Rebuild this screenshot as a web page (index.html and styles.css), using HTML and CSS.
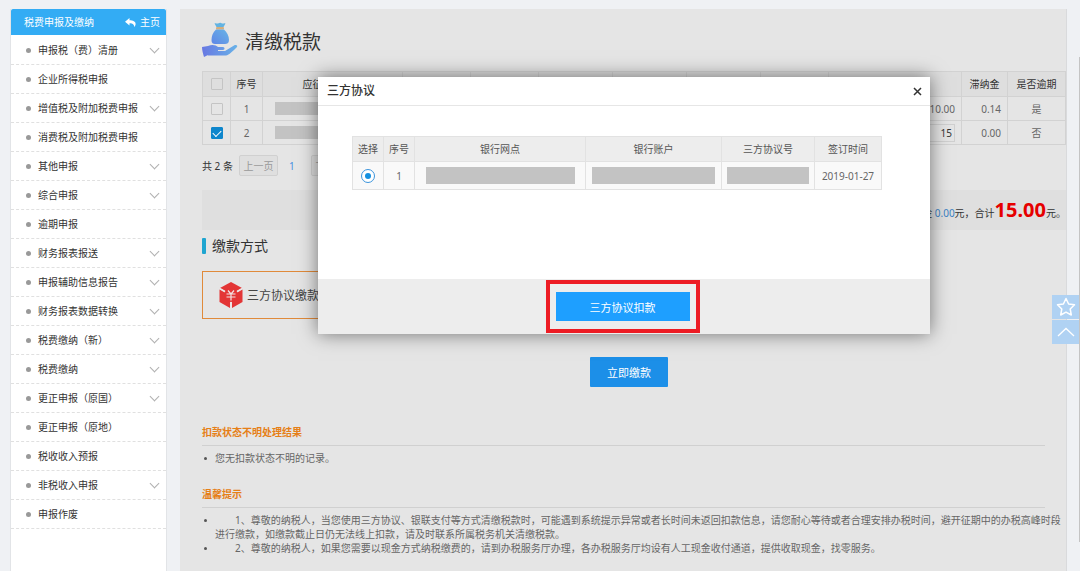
FILE: index.html
```html
<!DOCTYPE html>
<html lang="zh-CN">
<head>
    <meta charset="UTF-8">
    <meta name="viewport" content="width=device-width, initial-scale=1.0">
    <title>清缴税款</title>
    <link rel="stylesheet" href="styles.css">
</head>
<body>
    <div class="layout">
        <!-- 左侧菜单 -->
        <aside class="sidebar">
            <div class="sidebar-head">
                <h2>税费申报及缴纳</h2>
                <a href="#">
                    <svg width="11" height="9" viewBox="0 0 22 18"><path d="M9 0 0 7.500 9 15V10.500C15 10 18 12 18.500 18 25 10 19 4.500 9 4.500Z" fill="#fff"/></svg>
                    主页
                </a>
            </div>
            <ul class="menu">
                <li class="has-sub"><a href="#">申报税（费）清册</a></li>
                <li><a href="#">企业所得税申报</a></li>
                <li class="has-sub"><a href="#">增值税及附加税费申报</a></li>
                <li><a href="#">消费税及附加税费申报</a></li>
                <li class="has-sub"><a href="#">其他申报</a></li>
                <li class="has-sub"><a href="#">综合申报</a></li>
                <li><a href="#">逾期申报</a></li>
                <li class="has-sub"><a href="#">财务报表报送</a></li>
                <li class="has-sub"><a href="#">申报辅助信息报告</a></li>
                <li class="has-sub"><a href="#">财务报表数据转换</a></li>
                <li class="has-sub"><a href="#">税费缴纳（新）</a></li>
                <li class="has-sub"><a href="#">税费缴纳</a></li>
                <li class="has-sub"><a href="#">更正申报（原国）</a></li>
                <li><a href="#">更正申报（原地）</a></li>
                <li><a href="#">税收收入预报</a></li>
                <li class="has-sub"><a href="#">非税收入申报</a></li>
                <li><a href="#">申报作废</a></li>
            </ul>
        </aside>

        <main class="content">
            <header class="page-title">
                <svg width="36" height="36" viewBox="0 0 36 36">
                    <defs>
                        <linearGradient id="bag" x1="0" y1="1" x2="1" y2="0">
                            <stop offset="0" stop-color="#5f86e6"/>
                            <stop offset="1" stop-color="#67b4e6"/>
                        </linearGradient>
                        <linearGradient id="hand" x1="0" y1="0" x2="1" y2="0">
                            <stop offset="0" stop-color="#6878e2"/>
                            <stop offset="1" stop-color="#68b2e8"/>
                        </linearGradient>
                    </defs>
                    <path d="M12.500 1.500C14 .5 15 2 16 1.500 17.500.5 19 .5 20 1.500 21 2 22 .5 23.500 1.500L21.500 5H14.500Z" fill="#62b3e2"/>
                    <rect x="14" y="5" width="8" height="2.500" rx="1" fill="#d6ae7c"/>
                    <path d="M14 7.500H22C25 10 27 14 27 18 27 21 25 22 23 22H13C11 22 9.500 21 9.500 18 9.500 14 11 10 14 7.500Z" fill="url(#bag)"/>
                    <path d="M0 25 6 24V33L2 35C1 32 0 28 0 25ZM6 24C10 22 14 23 16 25H21C23 25 23 28 21 28H16V29H23L32 23.500C34 22.500 36 23.500 35 25 31 29 27 33 24 33.500H6Z" fill="url(#hand)"/>
                </svg>
                <h1>清缴税款</h1>
            </header>

            <table class="tax-table">
                <colgroup>
                    <col class="w-check"><col class="w-no"><col class="w-cert">
                    <col class="w-mid"><col class="w-mid"><col class="w-wide"><col class="w-wide"><col class="w-wide"><col class="w-mid">
                    <col><col class="w-late"><col class="w-due">
                </colgroup>
                <thead>
                    <tr>
                        <th><input type="checkbox" aria-label="全选"></th>
                        <th>序号</th>
                        <th>应征凭证序号</th>
                        <th></th><th></th><th></th><th></th><th></th><th></th><th></th>
                        <th>滞纳金</th>
                        <th>是否逾期</th>
                    </tr>
                </thead>
                <tbody>
                    <tr>
                        <td><input type="checkbox" aria-label="第1条"></td>
                        <td>1</td>
                        <td><span class="mask mask-cert"></span></td>
                        <td></td><td></td><td></td><td></td><td></td><td></td>
                        <td class="num">10.00</td>
                        <td class="num">0.14</td>
                        <td>是</td>
                    </tr>
                    <tr>
                        <td><input type="checkbox" aria-label="第2条" checked></td>
                        <td>2</td>
                        <td><span class="mask mask-cert"></span></td>
                        <td></td><td></td><td></td><td></td><td></td><td></td>
                        <td class="num"><input class="amount" type="text" value="15" aria-label="缴款金额"></td>
                        <td class="num">0.00</td>
                        <td>否</td>
                    </tr>
                </tbody>
            </table>

            <div class="pager">
                <span>共 2 条</span>
                <button type="button" disabled>上一页</button>
                <a href="#">1</a>
                <button type="button" disabled>下一页</button>
            </div>

            <p class="summary">滞纳金 <span class="blue">0.00</span>元，合计<strong>15.00</strong>元。</p>

            <h2 class="section-title">缴款方式</h2>
            <button type="button" class="pay-way">
                <svg width="24" height="26" viewBox="0 0 24 26">
                    <path d="M12 0 23 6 12 12 1 6Z" fill="#e33535"/>
                    <path d="M.5 7.500 11 13.500V26L.5 20ZM23.500 7.500 13 13.500V26L23.500 20Z" fill="#e33535"/>
                    <circle cx="12" cy="13" r="7" fill="#e33535"/>
                    <path d="M9 8.500 12 12 15 8.500M7.500 12H16.500M7.500 15H16.500M12 12V18.500" fill="none" stroke="#f3e3e3" stroke-width="1.200"/>
                    <path d="M1 6.500 6 9.500M23 6.500 18 9.500M12 20V26" stroke="#f0e5e5" stroke-width="1.400"/>
                </svg>
                三方协议缴款
            </button>
            <button type="button" class="pay-now">立即缴款</button>

            <section class="notes">
                <h3>扣款状态不明处理结果</h3>
                <ul>
                    <li>您无扣款状态不明的记录。</li>
                </ul>
            </section>
            <section class="notes tips">
                <h3>温馨提示</h3>
                <ul>
                    <li>1、尊敬的纳税人，当您使用三方协议、银联支付等方式清缴税款时，可能遇到系统提示异常或者长时间未返回扣款信息，请您耐心等待或者合理安排办税时间，避开征期中的办税高峰时段进行缴款，如缴款截止日仍无法线上扣款，请及时联系所属税务机关清缴税款。</li>
                    <li>2、尊敬的纳税人，如果您需要以现金方式纳税缴费的，请到办税服务厅办理，各办税服务厅均设有人工现金收付通道，提供收取现金，找零服务。</li>
                </ul>
            </section>

            <!-- 三方协议弹窗 -->
            <div class="modal-wrap">
                <div class="modal" role="dialog" aria-labelledby="modalTitle">
                    <div class="modal-head">
                        <h2 id="modalTitle">三方协议</h2>
                        <button type="button" aria-label="关闭">
                            <svg width="9" height="9" viewBox="0 0 9 9"><path d="M1 1 8 8M8 1 1 8" stroke="#333" stroke-width="1.500"/></svg>
                        </button>
                    </div>
                    <div class="modal-body">
                        <table class="bank-table">
                            <colgroup>
                                <col class="w-pick"><col class="w-pick"><col><col class="w-account"><col class="w-agree"><col class="w-date">
                            </colgroup>
                            <thead>
                                <tr><th>选择</th><th>序号</th><th>银行网点</th><th>银行账户</th><th>三方协议号</th><th>签订时间</th></tr>
                            </thead>
                            <tbody>
                                <tr>
                                    <td><input type="radio" name="agreement" aria-label="选择协议1" checked></td>
                                    <td>1</td>
                                    <td><span class="mask mask-bank"></span></td>
                                    <td><span class="mask mask-account"></span></td>
                                    <td><span class="mask mask-agree"></span></td>
                                    <td>2019-01-27</td>
                                </tr>
                            </tbody>
                        </table>
                    </div>
                    <div class="modal-foot">
                        <div class="highlight">
                            <button type="button">三方协议扣款</button>
                        </div>
                    </div>
                </div>
            </div>
        </main>
    </div>

    <div class="float-tools">
        <a href="#" aria-label="收藏">
            <svg width="20" height="20" viewBox="0 0 20 20"><path d="M10 1.500 12.600 7 18.500 7.800 14.200 12 15.300 18 10 15.100 4.700 18 5.800 12 1.500 7.800 7.400 7Z" fill="none" stroke="#fff" stroke-width="1.500" stroke-linejoin="round"/></svg>
        </a>
        <a href="#" aria-label="返回顶部">
            <svg width="18" height="10" viewBox="0 0 18 10"><path d="M1 9 9 1.500 17 9" fill="none" stroke="#fff" stroke-width="1.300"/></svg>
        </a>
    </div>
    <div class="scroll-thumb"></div>
</body>
</html>
```

FILE: styles.css
```css
* {
    box-sizing: border-box;
}
body {
    margin: 0;
    background: #eff1f4;
    color: #333;
    font-family: "Noto Sans", "Noto Sans CJK SC", sans-serif;
    font-size: 10px;
    line-height: 14px;
}
h1, h2, h3, p, ul {
    margin: 0;
    padding: 0;
    font-weight: normal;
}
a {
    color: inherit;
    text-decoration: none;
}
button, input {
    font-family: inherit;
    font-size: inherit;
}
svg {
    display: block;
}
.layout {
    display: flex;
    gap: 13px;
    height: 100vh;
    padding: 9px 13px 0 10px;
    overflow: hidden;
}

/* 左侧菜单 */
.sidebar {
    flex: 0 0 157px;
    background: #fff;
    border: 1px solid #e2e4e7;
    border-width: 0 1px;
}
.sidebar-head {
    display: flex;
    justify-content: space-between;
    align-items: center;
    height: 26px;
    padding: 0 6px 0 13px;
    background: #33acf4;
    border-radius: 2px 2px 0 0;
    color: #fff;
}
.sidebar-head h2 {
    font-size: 10px;
}
.sidebar-head a {
    display: flex;
    align-items: center;
    gap: 4px;
}
.menu {
    padding-top: 1px;
    list-style: none;
}
.menu li {
    display: flex;
    align-items: center;
    height: 29px;
    padding: 0 8px 0 15px;
    border-bottom: 1px dashed #e0e0e0;
}
.menu li::before {
    content: "";
    width: 5px;
    height: 5px;
    margin-right: 7px;
    border-radius: 50%;
    background: #999;
}
.menu a {
    flex: 1;
}
.menu .has-sub::after {
    content: "";
    width: 6px;
    height: 6px;
    margin-bottom: 4px;
    border: solid #b0b0b0;
    border-width: 0 1px 1px 0;
    transform: rotate(45deg);
}

/* 主内容 */
.content {
    flex: 1;
    min-width: 0;
    position: relative;
    padding: 13px 0 0 22px;
    background: #e5e5e5;
    border-right: 1px solid #d9dadc;
}
.page-title {
    display: flex;
    align-items: center;
    gap: 7px;
    height: 36px;
}
.page-title h1 {
    padding-top: 3px;
    font-size: 19px;
    line-height: 28px;
}
table {
    width: 100%;
    border-collapse: collapse;
    table-layout: fixed;
}
th, td {
    padding: 0;
    border: 1px solid #d2d2d2;
    text-align: center;
    font-weight: normal;
}
td {
    color: #666;
}
.tax-table {
    margin-top: 13px;
}
.tax-table th {
    height: 25px;
    background: #dedede;
}
.tax-table td {
    height: 24px;
}
.tax-table .num {
    padding-right: 6px;
    text-align: right;
}
.w-check { width: 28px; }
.w-no { width: 32px; }
.w-cert { width: 140px; }
.w-mid { width: 68px; }
.w-wide { width: 74px; }
.w-late { width: 46px; }
.w-due { width: 58px; }
.tax-table input[type="checkbox"] {
    display: block;
    appearance: none;
    width: 12px;
    height: 12px;
    margin: 0 auto;
    border: 1px solid #c4c4c4;
    border-radius: 1px;
}
.tax-table input[type="checkbox"]:checked {
    background: #0e86cc;
    border-color: #0e86cc;
}
.tax-table input[type="checkbox"]:checked::after {
    content: "";
    display: block;
    width: 7px;
    height: 4px;
    margin: 2px 0 0 1px;
    border: solid #fff;
    border-width: 0 0 1px 1px;
    transform: rotate(-45deg);
}
.amount {
    display: block;
    width: 112px;
    height: 18px;
    margin-left: auto;
    padding: 0 2px;
    background: #e5e5e5;
    border: 1px solid #d0d0d0;
    color: #333;
    text-align: right;
}
.mask {
    display: block;
    height: 17px;
    margin: 0 auto;
    background: #c3c3c3;
}
.mask-cert {
    width: 116px;
    height: 13px;
}
.mask-bank { width: 149px; }
.mask-account { width: 123px; }
.mask-agree { width: 82px; }

.pager {
    display: flex;
    align-items: center;
    height: 21px;
    margin-top: 10px;
}
.pager button {
    width: 39px;
    height: 21px;
    margin-left: 6px;
    padding: 0;
    background: #dfdfdf;
    border: 1px solid #d0d0d0;
    border-radius: 2px;
    color: #999;
}
.pager a {
    width: 26px;
    margin-left: 1px;
    color: #4a90e2;
    text-align: center;
}
.summary {
    height: 40px;
    margin-top: 14px;
    background: #dfdfdf;
    line-height: 40px;
    text-align: right;
}
.summary strong {
    color: #e60000;
    font-size: 20px;
}
.blue {
    color: #3c82c4;
}
.section-title {
    display: flex;
    align-items: center;
    gap: 6px;
    margin-top: 6px;
    font-size: 14px;
    line-height: 20px;
}
.section-title::before {
    content: "";
    width: 4px;
    height: 16px;
    border-radius: 1px;
    background: #1fa5d0;
}
.pay-way {
    display: flex;
    align-items: center;
    gap: 4px;
    width: 160px;
    height: 48px;
    margin-top: 15px;
    padding: 0 16px;
    background: none;
    border: 1px solid #e08a3a;
    color: #444;
    font-size: 12px;
    white-space: nowrap;
}
.pay-now {
    display: block;
    width: 78px;
    height: 30px;
    margin: 38px auto 0;
    padding: 0;
    background: #1c8fe8;
    border: 0;
    border-radius: 1px;
    color: #fff;
    font-size: 11px;
    position: relative;
    right: 5px;
}
.notes {
    margin-top: 38px;
    color: #666;
}
.notes h3 {
    margin-right: 21px;
    padding-bottom: 6px;
    border-bottom: 1px solid #d0d0d0;
    color: #e67f17;
    font-size: 10px;
    font-weight: bold;
}
.notes ul {
    padding: 5px 3px 0 13px;
}
.notes.tips {
    margin-top: 22px;
}
.tips li {
    text-indent: 20px;
}
.notes li {
    list-style: none;
}
.notes li::before {
    content: "";
    float: left;
    width: 3px;
    height: 3px;
    margin: 6px 0 0 -11px;
    border-radius: 50%;
    background: #555;
}

/* 弹窗 */
.modal-wrap {
    position: absolute;
    top: 68px;
    left: 2px;
    right: 0;
    display: flex;
    justify-content: center;
}
.modal {
    width: 612px;
    background: #fff;
    box-shadow: 0 0 18px rgba(0, 0, 0, 0.5);
}
.modal-head {
    display: flex;
    justify-content: space-between;
    align-items: center;
    height: 29px;
    padding: 0 8px 0 9px;
    border-bottom: 1px solid #e6e6e6;
}
.modal-head h2 {
    font-size: 12px;
    font-weight: 500;
}
.modal-head button {
    padding: 0;
    background: none;
    border: 0;
}
.modal-body {
    height: 173px;
    padding: 30px 48px 0 34px;
}
.bank-table th, .bank-table td {
    border-color: #e2e2e2;
}
.bank-table th {
    height: 25px;
    background: #ededed;
    color: #555;
}
.bank-table td {
    height: 28px;
    background: #f9f9f9;
}
.w-pick { width: 31px; }
.w-account { width: 136px; }
.w-agree { width: 93px; }
.w-date { width: 67px; }
.bank-table input {
    display: block;
    appearance: none;
    width: 14px;
    height: 14px;
    margin: 0 auto;
    padding: 3px;
    border: 1px solid #3a94dc;
    border-radius: 50%;
    background: #fff;
}
.bank-table input:checked::after {
    content: "";
    display: block;
    width: 6px;
    height: 6px;
    border-radius: 50%;
    background: #1490e0;
}
.modal-foot {
    display: flex;
    justify-content: center;
    padding: 1px 3px 1px 0;
    background: #ededed;
}
.highlight {
    padding: 8px 6px;
    border: 4px solid #ed1c24;
}
.highlight button {
    display: block;
    width: 134px;
    height: 29px;
    padding: 0;
    background: #1e9fff;
    border: 0;
    color: #fff;
    font-size: 11px;
}

/* 右侧悬浮按钮 */
.float-tools {
    position: fixed;
    top: 295px;
    right: 1px;
    display: grid;
    gap: 1px;
}
.float-tools a {
    display: grid;
    place-items: center;
    width: 27px;
    height: 24px;
    background: #b0d2f3;
}
.scroll-thumb {
    position: fixed;
    top: 10%;
    right: 0;
    width: 1px;
    height: 85%;
    background: #c4c4c4;
}
```
